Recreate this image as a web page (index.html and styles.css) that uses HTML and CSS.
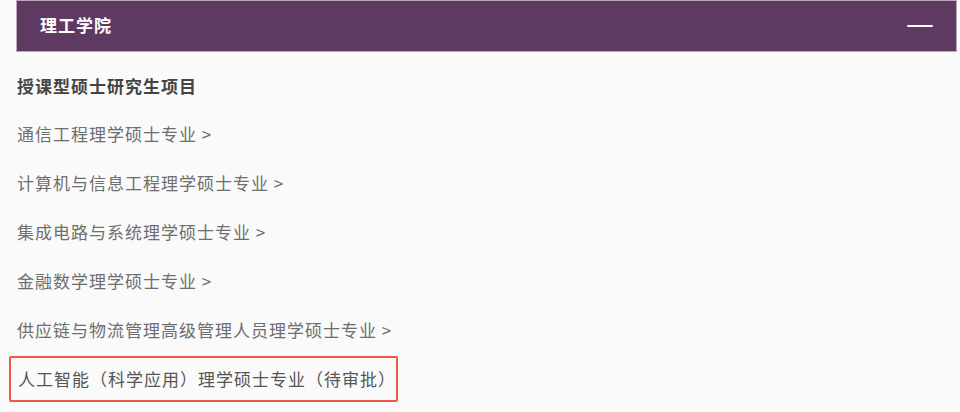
FILE: index.html
```html
<!DOCTYPE html>
<html lang="zh-CN">
<head>
<meta charset="utf-8">
<link rel="stylesheet" href="styles.css">
</head>
<body>
<div class="page">
  <div class="bar">
    <span class="bar-title">理工学院</span>
    <span class="bar-toggle"></span>
  </div>
  <div class="content">
    <h3 class="sub">授课型硕士研究生项目</h3>
    <ul class="list">
      <li class="item">通信工程理学硕士专业 &gt;</li>
      <li class="item">计算机与信息工程理学硕士专业 &gt;</li>
      <li class="item">集成电路与系统理学硕士专业 &gt;</li>
      <li class="item">金融数学理学硕士专业 &gt;</li>
      <li class="item">供应链与物流管理高级管理人员理学硕士专业 &gt;</li>
      <li class="item item-hl"><span class="hl">人工智能（科学应用）理学硕士专业（待审批）</span></li>
    </ul>
  </div>
</div>
</body>
</html>
```
FILE: styles.css
```css
html, body {
  margin: 0;
  padding: 0;
  background: #fafafa;
}
body {
  font-family: "Noto Sans CJK SC", "Noto Sans", sans-serif;
  width: 960px;
  height: 412px;
  overflow: hidden;
}
.page {
  padding: 1px 4px 0 17px;
}
.bar {
  height: 50px;
  background: #5e3962;
  box-shadow: 0 0 0 1px #b9a9bb;
  display: flex;
  align-items: center;
  justify-content: space-between;
  padding: 0 23px 3px 23px;
  box-sizing: border-box;
}
.bar-title {
  color: #ffffff;
  font-size: 17px;
  font-weight: 700;
  letter-spacing: 1px;
}
.bar-toggle {
  width: 26px;
  height: 2px;
  background: #ffffff;
  border-radius: 1px;
  margin-top: 2px;
}
.content {
  padding: 0;
}
.sub {
  margin: 22px 0 0 0;
  font-size: 17px;
  font-weight: 700;
  color: #444444;
  letter-spacing: 1px;
  line-height: 26px;
}
.list {
  list-style: none;
  margin: 10px 0 0 0;
  padding: 0;
}
.item {
  font-size: 17px;
  color: #6e6e6e;
  letter-spacing: 1px;
  line-height: 26px;
  height: 49px;
  display: flex;
  align-items: center;
}
.hl {
  display: inline-block;
  margin-left: -8px;
  padding: 8px 0 8px 7px;
  border: 2px solid #ee5a47;
  border-radius: 2px;
  color: #555555;
}
```
